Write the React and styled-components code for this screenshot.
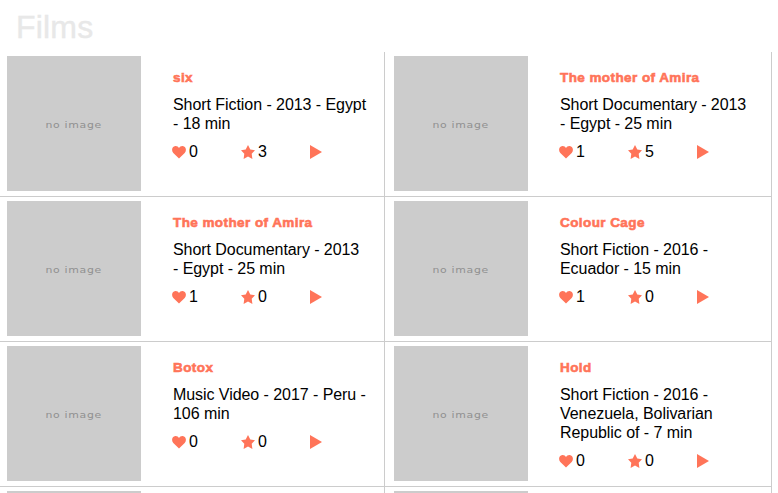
import React from 'react';
import styled, { createGlobalStyle } from 'styled-components';

const Global = createGlobalStyle`
  html, body { margin: 0; padding: 0; background: #fff; overflow: hidden; }
  body { font-family: "Liberation Sans", Arial, sans-serif; color: #000; }
`;

const Page = styled.div`
  width: 778px;
  height: 493px;
  overflow: hidden;
`;

const Heading = styled.h1`
  margin: 0;
  height: 52px;
  padding: 8px 0 0 16px;
  box-sizing: border-box;
  font-size: 32px;
  line-height: 38px;
  font-weight: 400;
  letter-spacing: 0.2px;
  color: #e8e8e8;
  -webkit-text-stroke: 0.4px #e8e8e8;
`;

const Grid = styled.div`
  display: grid;
  grid-template-columns: 385px 387px;
  grid-auto-rows: 145px;
`;

const Card = styled.article`
  display: flex;
  box-sizing: border-box;
  padding: 4px 0 0 7px;
  border-right: 1px solid #cccccc;
  border-bottom: 1px solid #cccccc;
  &:nth-child(even) { padding-left: 9px; }
`;

const Thumb = styled.div`
  flex: 0 0 134px;
  height: 135px;
  padding-top: 4px;
  box-sizing: border-box;
  background: #cccccc;
  display: flex;
  align-items: center;
  justify-content: center;
`;

const NoImage = styled.span`
  color: #909090;
  font-family: "DejaVu Sans", sans-serif;
  font-size: 8px;
  letter-spacing: 0.5px;
  transform: scaleX(1.36);
`;

const Info = styled.div`
  flex: 1;
  min-width: 0;
  padding: 14px 17px 0 32px;
`;

const Title = styled.h2`
  margin: 0 0 9px;
  font-family: "Liberation Sans", Arial, sans-serif;
  font-size: 13.5px;
  line-height: 16px;
  font-weight: 700;
  color: #ff7459;
  -webkit-text-stroke: 0.6px #ff7459;
  letter-spacing: 0.42px;
`;

const Meta = styled.p`
  margin: 0 0 9px;
  font-size: 16px;
  line-height: 19px;
  letter-spacing: -0.06px;
`;

const Stats = styled.div`
  display: flex;
  align-items: center;
  margin-left: -1px;
  font-size: 16px;
  line-height: 19px;
`;

const Stat = styled.span`
  display: flex;
  flex: none;
  align-items: center;
  gap: 3px;
  width: 69px;
`;

const Glyph = styled.svg`
  width: ${p => p.$w}px;
  height: 14px;
  fill: #ff7459;
  flex: none;
`;

const Heart = () => (
  <Glyph $w={14} viewBox="0 0 14 14"><path d="M7 13.500 1.300 7.900C-.9 5.600-.1 1.200 3.400 1 5 .9 6.300 1.800 7 3 7.700 1.800 9 .9 10.600 1 14.100 1.200 14.900 5.600 12.700 7.900Z" /></Glyph>
);
const Star = () => (
  <Glyph $w={14} viewBox="0 0 14 14"><path d="M7 0 9.300 4.500 14 5.300 10.700 8.800 11.400 14 7 11.600 2.600 14 3.300 8.800 0 5.300 4.700 4.500Z" /></Glyph>
);
const Play = () => (
  <Glyph $w={12} viewBox="0 0 12 14"><path d="M0 0 12 7 0 14Z" /></Glyph>
);

const films = [
  ['six', 'Short Fiction - 2013 - Egypt - 18 min', 0, 3],
  ['The mother of Amira', 'Short Documentary - 2013 - Egypt - 25 min', 1, 5],
  ['The mother of Amira', 'Short Documentary - 2013 - Egypt - 25 min', 1, 0],
  ['Colour Cage', 'Short Fiction - 2016 - Ecuador - 15 min', 1, 0],
  ['Botox', 'Music Video - 2017 - Peru - 106 min', 0, 0],
  ['Hold', 'Short Fiction - 2016 - Venezuela, Bolivarian Republic of - 7 min', 0, 0],
  ['', '', 0, 0],
  ['', '', 0, 0],
];

export default function App() {
  return (
    <Page>
      <Global />
      <Heading>Films</Heading>
      <Grid>
        {films.map(([title, meta, likes, stars], i) => (
          <Card key={i}>
            <Thumb>{title && <NoImage>no image</NoImage>}</Thumb>
            {title && (
              <Info>
                <Title>{title}</Title>
                <Meta>{meta}</Meta>
                <Stats>
                  <Stat><Heart />{likes}</Stat>
                  <Stat><Star />{stars}</Stat>
                  <Stat><Play /></Stat>
                </Stats>
              </Info>
            )}
          </Card>
        ))}
      </Grid>
    </Page>
  );
}
